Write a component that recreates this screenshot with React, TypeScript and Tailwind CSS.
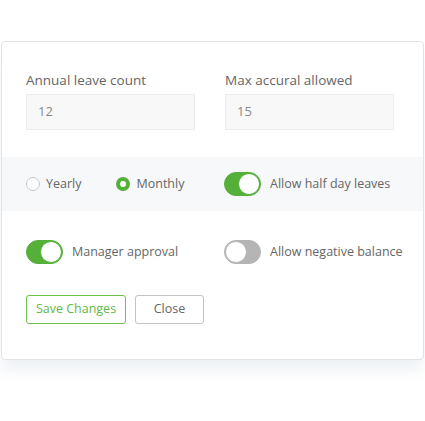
import React from "react";

const Toggle = ({ on }: { on: boolean }) => (
  <span
    className={
      "relative inline-flex items-center w-[37px] h-[24px] rounded-full border shrink-0 " +
      (on ? "bg-[#55b03a] border-[#55b03a]" : "bg-[#b5b5b5] border-[#b5b5b5]")
    }
  >
    <span
      className={
        "absolute top-[0px] w-[22px] h-[22px] rounded-full bg-white " +
        (on ? "right-[0px] border border-[#55b03a]" : "left-[0px] border border-[#b5b5b5]")
      }
    />
  </span>
);

export default function App() {
  const [period, setPeriod] = React.useState("monthly");
  return (
    <div className="w-[425px] h-[421px] bg-white font-['Open_Sans',sans-serif] pt-[41px]">
      <div className="mx-[1px] border border-[#e4e4e4] rounded-[4px] bg-white shadow-[0_12px_14px_-2px_rgba(230,233,240,0.7)] pb-[35px]">
        <div className="grid grid-cols-[199px_1fr] px-[24px] pt-[28px]">
          <div>
            <div className="text-[13.5px] leading-[20px] text-[#666] whitespace-nowrap">Annual leave count</div>
            <div className="mt-[4px] w-[169px] h-[36px] bg-[#f8f8f8] border border-[#ececec] flex items-center px-[11px] text-[13px] text-[#8a8a8a]">
              12
            </div>
          </div>
          <div>
            <div className="text-[13.5px] leading-[20px] text-[#666] whitespace-nowrap">Max accural allowed</div>
            <div className="mt-[4px] w-[169px] h-[36px] bg-[#f8f8f8] border border-[#ececec] flex items-center px-[11px] text-[13px] text-[#8a8a8a]">
              15
            </div>
          </div>
        </div>

        <div className="mt-[27px] h-[54px] bg-[#f7f8fa] grid grid-cols-[198px_1fr] items-center px-[24px] text-[12.5px] text-[#666] whitespace-nowrap">
          <div className="flex items-center">
            <button className="flex items-center" onClick={() => setPeriod("yearly")}>
              <span
                className={
                  "w-[14px] h-[14px] rounded-full " +
                  (period === "yearly" ? "border-[4px] border-[#55b03a] bg-white" : "border border-[#c8c8c8] bg-white")
                }
              />
              <span className="ml-[6px]">Yearly</span>
            </button>
            <button className="flex items-center ml-[35px]" onClick={() => setPeriod("monthly")}>
              <span
                className={
                  "w-[14px] h-[14px] rounded-full " +
                  (period === "monthly" ? "border-[4px] border-[#55b03a] bg-white" : "border border-[#c8c8c8] bg-white")
                }
              />
              <span className="ml-[6px]">Monthly</span>
            </button>
          </div>
          <div className="flex items-center">
            <Toggle on={true} />
            <span className="ml-[9px]">Allow half day leaves</span>
          </div>
        </div>

        <div className="mt-[29px] grid grid-cols-[198px_1fr] items-center px-[24px] text-[12.5px] text-[#666] whitespace-nowrap">
          <div className="flex items-center">
            <Toggle on={true} />
            <span className="ml-[9px]">Manager approval</span>
          </div>
          <div className="flex items-center">
            <Toggle on={false} />
            <span className="ml-[9px]">Allow negative balance</span>
          </div>
        </div>

        <div className="mt-[31px] px-[24px] flex gap-[9px]">
          <button className="h-[29px] w-[100px] border border-[#6cc04a] rounded-[3px] text-[12.5px] text-[#62b846] whitespace-nowrap">
            Save Changes
          </button>
          <button className="h-[29px] w-[69px] border border-[#c4c4c4] rounded-[3px] text-[12.5px] text-[#666]">
            Close
          </button>
        </div>
      </div>
    </div>
  );
}
